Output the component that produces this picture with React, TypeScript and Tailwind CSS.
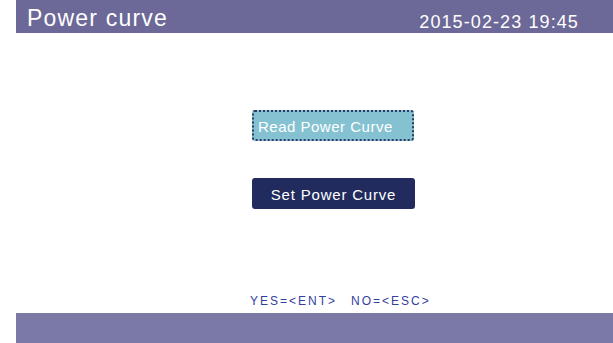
export default function App() {
  return (
    <div className="w-[613px] h-[343px] bg-white flex flex-col font-['Liberation_Sans',Arial,sans-serif] overflow-hidden">
      {/* title bar */}
      <div className="ml-[16px] h-[33px] bg-[#6c6898] flex items-start justify-between pl-[11px] pr-[34px] text-white">
        <span className="mt-[7px] text-[23px] leading-none tracking-[1.2px]">Power curve</span>
        <span className="mt-[13px] text-[18px] leading-none tracking-[1.1px]">2015-02-23 19:45</span>
      </div>

      {/* menu */}
      <div className="flex-1 flex flex-col pl-[252px]">
        <div className="mt-[77px] w-[162px] h-[31px] rounded-[3px] bg-[#84c2d2] border-2 border-dotted border-[#2c3a66] flex items-center pl-[4px] pt-[1px] text-white text-[15px] leading-none tracking-[0.5px]">
          Read Power Curve
        </div>
        <div className="mt-[37px] w-[163px] h-[31px] rounded-[3px] bg-[#212b5e] flex items-center justify-center pt-[2px] text-white text-[15px] leading-none tracking-[0.8px]">
          Set Power Curve
        </div>
        <div className="mt-[86px] -ml-[2px] flex gap-[14px] text-[12px] leading-none tracking-[2px] text-[#33409e]">
          <span>YES=&lt;ENT&gt;</span>
          <span>NO=&lt;ESC&gt;</span>
        </div>
      </div>

      {/* bottom bar */}
      <div className="ml-[16px] h-[30px] bg-[#7b79a6]" />
    </div>
  );
}
